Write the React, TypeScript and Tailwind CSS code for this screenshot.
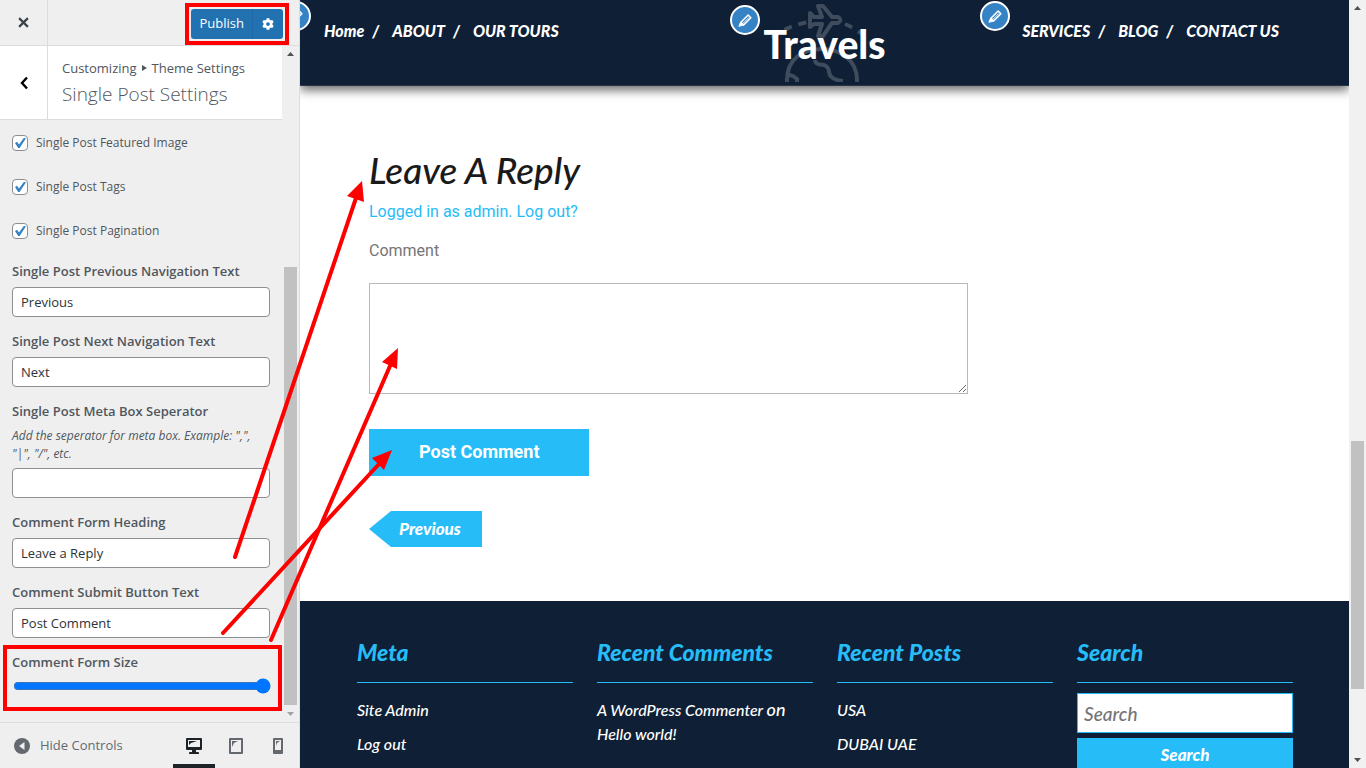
import { useState } from "react";
import type { ReactNode } from "react";
import { FaCog } from "react-icons/fa";

const sans = "font-['Open_Sans','Noto_Sans',sans-serif]";
const display = "font-['Lato',sans-serif]";

const CheckRow = ({ id, label }: { id: string; label: string }) => {
    const [checked, setChecked] = useState(true);

    return (
        <div className="flex h-4 items-center gap-2">
            <span className="relative flex size-4">
                <input
                    id={id}
                    type="checkbox"
                    checked={checked}
                    onChange={(e) => setChecked(e.target.checked)}
                    className="size-4 appearance-none rounded border border-[#8c8f94] bg-white"
                />
                {checked && (
                    <svg viewBox="0 0 16 16" className="pointer-events-none absolute inset-0 size-4">
                        <path d="M3 8 5 6.800l2 2.600L11.800 3l2.200.3-6.400 9.700H6.200z" fill="#3582c4" />
                    </svg>
                )}
            </span>
            <label htmlFor={id} className="text-[12px] leading-4 text-[#50575e]">{label}</label>
        </div>
    );
};

const TextField = ({ id, label, value, hint }: { id: string; label: string; value: string; hint?: string }) => (
    <div>
        <label htmlFor={id} className="mb-1 block text-[13px] leading-6 font-semibold text-[#50575e]">{label}</label>
        {hint && <p className="mb-[5px] text-[12px] leading-[18px] text-[#50575e] italic">{hint}</p>}
        <input
            id={id}
            type="text"
            defaultValue={value}
            className="block h-[30px] w-full rounded border border-[#8c8f94] bg-white px-2 text-[13px] text-[#2c3338] outline-none"
        />
    </div>
);

// Grey gutter with arrows, the thumb is one of the flex children
const Scrollbar = ({ className, children, dim }: { className: string; children: ReactNode; dim?: boolean }) => (
    <div className={`flex flex-col items-center ${className}`}>
        <svg viewBox="0 0 17 17" className="size-[17px] shrink-0"><path d="M8.500 6 12 10H5z" fill="#505050" /></svg>
        <div className="flex min-h-0 flex-1 flex-col">{children}</div>
        <svg viewBox="0 0 17 17" className="size-[17px] shrink-0"><path d="M8.500 11 12 7H5z" fill={dim ? "#a3a3a3" : "#505050"} /></svg>
    </div>
);

const EditBadge = ({ className }: { className: string }) => (
    <button type="button" aria-label="Edit" className={`absolute flex size-[30px] items-center justify-center rounded-full border-2 border-white bg-[#3582c4] ${className}`}>
        <svg viewBox="0 0 20 20" className="size-[18px]" fill="none" stroke="#fff" strokeLinejoin="round">
            <path d="M13.500 4.500 16.500 7.500 8.500 15.500 5.500 12.500z" strokeWidth="1.800" />
            <path d="M14.500 7 7.500 14" strokeWidth="1" />
            <path d="M5 12.500 8 15.800 3.200 17z" fill="#fff" strokeWidth="1" />
        </svg>
    </button>
);

const DeviceButton = ({ label, active, children }: { label: string; active?: boolean; children: ReactNode }) => (
    <button
        type="button"
        aria-label={label}
        className={`flex h-[45px] w-[42px] items-center justify-center border-b-4 pt-1 ${active ? "border-[#1d2327] text-[#1d2327]" : "border-transparent text-[#646970]"}`}
    >
        <svg viewBox="0 0 20 20" className="size-5" fill="currentColor" fillRule="evenodd">{children}</svg>
    </button>
);

const Sidebar = () => (
    <aside className={`flex w-[300px] shrink-0 flex-col border-r border-[#dcdcde] bg-[#efefef] ${sans}`}>
        <div className="flex h-[46px] shrink-0 items-center justify-between border-b border-[#dcdcde]">
            <button type="button" aria-label="Close" className="flex h-full w-12 items-center justify-center border-r border-[#dcdcde]">
                <svg viewBox="0 0 10 10" className="size-[11px]"><path d="M1 1l8 8M9 1L1 9" stroke="#3c434a" strokeWidth="2" /></svg>
            </button>
            <div className="mt-0.5 mr-2.5 flex border-4 border-[#ff0000] p-0.5">
                <button type="button" className="h-[30px] rounded-l-[3px] border-r border-[#2069a6] bg-[#2271b1] pr-2 pl-[9px] text-[13px] text-white">Publish</button>
                <button type="button" aria-label="Publish settings" className="flex h-[30px] w-[30px] items-center justify-center rounded-r-[3px] bg-[#2271b1] text-white">
                    <FaCog className="size-3" />
                </button>
            </div>
        </div>

        <div className="flex min-h-0 flex-1">
            <div className="flex w-[282px] flex-col">
                <div className="flex h-[74px] shrink-0 border-b border-[#dcdcde] bg-white">
                    <button type="button" aria-label="Back" className="flex w-12 items-center justify-center border-r border-[#dcdcde]">
                        <svg viewBox="0 0 8 14" className="h-3.5 w-2"><path d="M7 1.500 2 7l5 5.500" fill="none" stroke="#000" strokeWidth="2.400" /></svg>
                    </button>
                    <div className="pt-3 pl-3.5">
                        <div className="flex items-center gap-[5px] text-[13px] leading-5 text-[#50575e]">
                            Customizing
                            <span className="border-y-[3px] border-l-[5px] border-y-transparent border-l-[#50575e]" />
                            Theme Settings
                        </div>
                        <h3 className="text-[19px] leading-8 font-light text-[#50575e]">Single Post Settings</h3>
                    </div>
                </div>

                <div className="flex flex-col gap-3 px-3 pt-[15px]">
                    <div className="mb-2 flex flex-col gap-7">
                        <CheckRow id="featured" label="Single Post Featured Image" />
                        <CheckRow id="tags" label="Single Post Tags" />
                        <CheckRow id="pagination" label="Single Post Pagination" />
                    </div>
                    <TextField id="prev" label="Single Post Previous Navigation Text" value="Previous" />
                    <TextField id="next" label="Single Post Next Navigation Text" value="Next" />
                    <TextField id="sep" label="Single Post Meta Box Seperator" value="" hint={'Add the seperator for meta box. Example: ",", "|", "/", etc.'} />
                    <TextField id="heading" label="Comment Form Heading" value="Leave a Reply" />
                    <TextField id="submit" label="Comment Submit Button Text" value="Post Comment" />
                    <div className="relative">
                        <label htmlFor="size" className="block text-[13px] leading-6 font-semibold text-[#50575e]">Comment Form Size</label>
                        <input id="size" type="range" defaultValue={100} className="mx-px mt-1 block h-4 w-full accent-[#0075ff]" />
                        <div className="pointer-events-none absolute -top-[5px] -right-3 -left-[9px] h-[66px] border-4 border-[#ff0000]" />
                    </div>
                </div>
            </div>
            <Scrollbar className="w-[17px]" dim>
                <div className="flex-[204]" />
                <div className="w-[13px] flex-[439] bg-[#c1c1c1]" />
            </Scrollbar>
        </div>

        <div className="flex h-[46px] shrink-0 items-center justify-between border-t border-[#dcdcde]">
            <button type="button" className="flex items-center gap-2.5 pl-3.5 text-[13px] text-[#646970]">
                <svg viewBox="0 0 16 16" className="size-4"><circle cx="8" cy="8" r="8" fill="#646970" /><path d="M10.500 4v8L5 8z" fill="#efefef" /></svg>
                Hide Controls
            </button>
            <div className="flex">
                <DeviceButton label="Desktop" active>
                    <path d="M3 2h14q1 0 1 1v10q0 1-1 1h-5v2h2q1 0 1 1v1H5v-1q0-1 1-1h2v-2H3q-1 0-1-1V3q0-1 1-1zm1 2v7h12V4zm1 1h8L7 7 5 9z" />
                </DeviceButton>
                <DeviceButton label="Tablet">
                    <path d="M4 2h12q1 0 1 1v14q0 1-1 1H4q-1 0-1-1V3q0-1 1-1zm1 2v12h10V4zm1 1h6L8 7 6 11z" />
                </DeviceButton>
                <DeviceButton label="Mobile">
                    <path d="M6 2h8q1 0 1 1v14q0 1-1 1H6q-1 0-1-1V3q0-1 1-1zm1 2v10h6V4zm1 1h4L9 7 8 10z" />
                </DeviceButton>
            </div>
        </div>
    </aside>
);

const Menu = ({ items }: { items: string[] }) => (
    <ul className="flex gap-2">
        {items.map((item, i) => (
            <li key={item} className="flex gap-2">
                <a href="#">{item}</a>
                {i < items.length - 1 && <span className="w-3">/</span>}
            </li>
        ))}
    </ul>
);

const Logo = () => (
    <a href="#" className="relative flex h-20 w-[126px] items-center justify-center pt-1">
        <svg viewBox="0 0 126 80" className="absolute inset-0 h-20 w-[126px]" fill="none" stroke="#3f4c5e" strokeWidth="4">
            <path d="M10 36Q25 24 46 20M83 22Q100 29 114 46" strokeDasharray="8 7" />
            <path d="M56 4H61L70 15H76Q81 18 76 21H70L61 34H56L60 22H52L48 25V11L52 15H60z" strokeLinejoin="round" />
            <path d="M25 80C24 56 42 47 60 47S96 58 95 80M24 72l7 2 4 3v3M53 58q0 5 9 5 5 2 5 7 1 8 14 9" />
        </svg>
        <span className="relative text-[39px] leading-none font-black text-white">Travels</span>
    </a>
);

const Widget = ({ title, children }: { title: string; children: ReactNode }) => (
    <section>
        <h3 className="h-[45px] border-b border-[#26bcf7] text-[23px] leading-7 font-black text-[#26bcf7] italic">{title}</h3>
        {children}
    </section>
);

const Preview = () => (
    <main className="flex min-w-0 flex-1 flex-col overflow-hidden bg-white">
        <header className={`relative grid h-[86px] shrink-0 grid-cols-[1fr_auto_1fr] border-b border-[#2b3548] bg-[#0f1f35] pr-[70px] pl-6 text-[16px] leading-6 font-black text-white shadow-[0_4px_10px_rgba(0,0,0,0.6)] ${display}`}>
            <nav className="pt-[19px] italic"><Menu items={["Home", "ABOUT", "OUR TOURS"]} /></nav>
            <div className="relative ml-[46px] pt-0.5">
                <Logo />
                <EditBadge className="top-[5px] -left-8" />
            </div>
            <nav className="flex justify-end pt-[19px] italic">
                <div className="relative">
                    <Menu items={["SERVICES", "BLOG", "CONTACT US"]} />
                    <EditBadge className="-top-[18px] -left-[42px]" />
                </div>
            </nav>
            <EditBadge className="top-px -left-[19px]" />
        </header>

        <div className="shrink-0 px-[69px] pt-[58px] pb-[54px] font-['Roboto',sans-serif] text-[16px] leading-6">
            <h2 className={`text-[37px] leading-[52px] font-medium text-[#1a1a1a] italic ${display}`}>Leave A Reply</h2>
            <p className="mt-1 text-[#26bcf7]"><a href="#">Logged in as admin</a>. <a href="#">Log out?</a></p>
            <form onSubmit={(e) => e.preventDefault()}>
                <label htmlFor="comment" className="mt-[15px] mb-5 block text-[#757575]">Comment</label>
                <textarea id="comment" className="block h-[111px] w-full max-w-[599px] border border-[#b9b9b9] outline-none" />
                <button type="submit" className="mt-[35px] block h-[47px] bg-[#26bcf7] px-[50px] pb-0.5 text-[18px] font-bold text-white">Post Comment</button>
            </form>
            <a href="#" className={`mt-[35px] flex h-9 w-[113px] items-center bg-[#26bcf7] pl-[30px] text-[17px] font-black text-white italic [clip-path:polygon(22px_0,100%_0,100%_100%,22px_100%,0_50%)] ${display}`}>Previous</a>
        </div>

        <footer className={`grid flex-1 grid-cols-4 gap-6 bg-[#0f1f35] pt-[37px] pr-14 pl-[57px] text-[16px] leading-6 font-medium text-white italic ${display}`}>
            <Widget title="Meta">
                <ul className="mt-[15px] flex flex-col gap-2.5">
                    <li><a href="#">Site Admin</a></li>
                    <li><a href="#">Log out</a></li>
                </ul>
            </Widget>
            <Widget title="Recent Comments">
                <p className="mt-[15px]"><a href="#">A WordPress Commenter</a> <span className="text-[18px] leading-none">on</span> <a href="#">Hello world!</a></p>
            </Widget>
            <Widget title="Recent Posts">
                <ul className="mt-[15px] flex flex-col gap-2.5">
                    <li><a href="#">USA</a></li>
                    <li><a href="#">DUBAI UAE</a></li>
                </ul>
            </Widget>
            <Widget title="Search">
                <input type="search" aria-label="Search" placeholder="Search" className="mt-2.5 block h-10 w-full border border-[#26bcf7] bg-white px-1.5 text-[19px] text-[#757575] italic outline-none placeholder:text-[#757575]" />
                <button type="button" className="mt-[5px] block h-9 w-full bg-[#26bcf7] pb-0.5 text-[17px] font-black italic">Search</button>
            </Widget>
        </footer>
    </main>
);

const arrows = [
    { line: "M235 557 356 198", head: "362,181 347,196 364,202" },
    { line: "M271 640 390 366", head: "398,348 382,362 397,369" },
    { line: "M223 633 379 464", head: "392,450 372,458 384,470" },
];

export default function App() {
    return (
        <div className="relative flex h-screen overflow-hidden">
            <Sidebar />
            <Preview />
            <Scrollbar className="w-[17px] shrink-0 bg-[#f1f1f1]">
                <div className="flex-[424]" />
                <div className="w-[13px] flex-[248] bg-[#c1c1c1]" />
                <div className="flex-[62]" />
            </Scrollbar>

            {/* callouts from each setting to what it changes */}
            <svg className="pointer-events-none absolute inset-0 h-full w-full" stroke="#ff0000" strokeWidth="4" strokeLinecap="round">
                {arrows.map((a) => (
                    <g key={a.line}>
                        <path d={a.line} />
                        <polygon points={a.head} fill="#ff0000" stroke="none" />
                    </g>
                ))}
            </svg>
        </div>
    );
}
